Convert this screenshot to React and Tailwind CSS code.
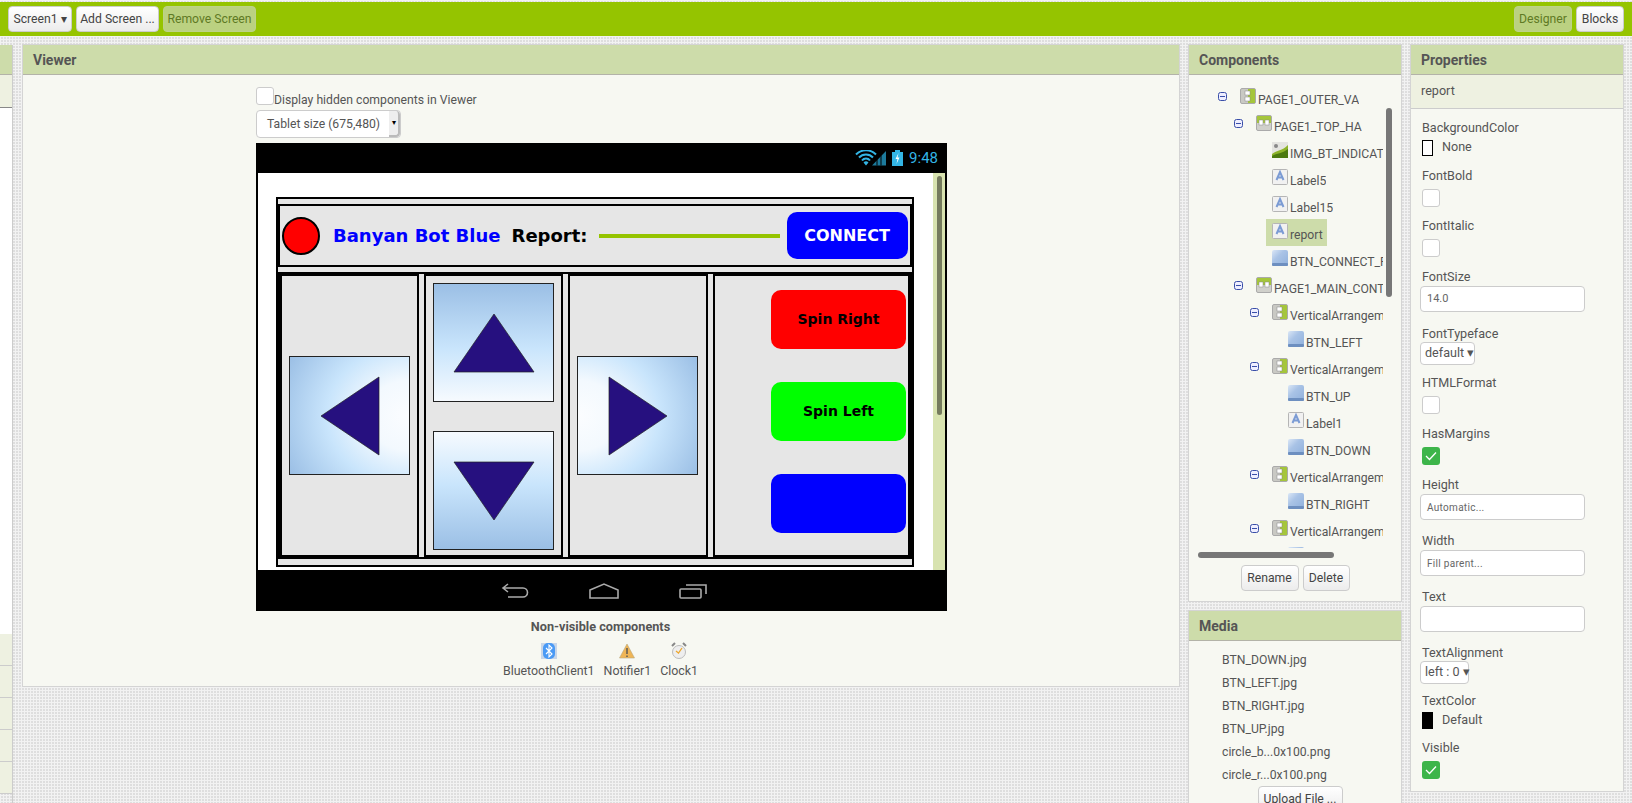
import React from "react";

const treeRows = [
  { depth: 0, icon: "va", name: "PAGE1_OUTER_VA", minus: true },
  { depth: 1, icon: "ha", name: "PAGE1_TOP_HA", minus: true },
  { depth: 2, icon: "image", name: "IMG_BT_INDICATOR" },
  { depth: 2, icon: "label", name: "Label5" },
  { depth: 2, icon: "label", name: "Label15" },
  { depth: 2, icon: "label", name: "report", selected: true },
  { depth: 2, icon: "button", name: "BTN_CONNECT_PAGE" },
  { depth: 1, icon: "ha", name: "PAGE1_MAIN_CONTROLS", minus: true },
  { depth: 2, icon: "va", name: "VerticalArrangement1", minus: true },
  { depth: 3, icon: "button", name: "BTN_LEFT" },
  { depth: 2, icon: "va", name: "VerticalArrangement2", minus: true },
  { depth: 3, icon: "button", name: "BTN_UP" },
  { depth: 3, icon: "label", name: "Label1" },
  { depth: 3, icon: "button", name: "BTN_DOWN" },
  { depth: 2, icon: "va", name: "VerticalArrangement3", minus: true },
  { depth: 3, icon: "button", name: "BTN_RIGHT" },
  { depth: 2, icon: "va", name: "VerticalArrangement4", minus: true },
  { depth: 3, icon: "button", name: "Button1" },
];

const mediaFiles = ["BTN_DOWN.jpg", "BTN_LEFT.jpg", "BTN_RIGHT.jpg", "BTN_UP.jpg", "circle_b...0x100.png", "circle_r...0x100.png"];

function TreeIcon({ type }) {
  if (type === "va") {
    return (
      <svg width="16" height="16" viewBox="0 0 16 16" className="shrink-0">
        <rect x="0.5" y="0.5" width="15" height="15" rx="1.5" fill="#c9c9c4" stroke="#aaa" />
        <path d="M8 1h6.500a.5.5 0 0 1 .5.5v13a.5.5 0 0 1-.5.5H8z" fill="#a5c63b" />
        <rect x="5" y="3" width="5" height="4" fill="#fff" stroke="#888" strokeWidth="0.5" />
        <rect x="5" y="9" width="5" height="4" fill="#fff" stroke="#888" strokeWidth="0.5" />
      </svg>
    );
  }
  if (type === "ha") {
    return (
      <svg width="16" height="16" viewBox="0 0 16 16" className="shrink-0">
        <rect x="0.5" y="0.5" width="15" height="15" rx="1.5" fill="#d0d0cb" stroke="#aaa" />
        <path d="M1 8V1.500a.5.5 0 0 1 .5-.5h13a.5.5 0 0 1 .5.5V8z" fill="#a5c63b" />
        <rect x="3" y="5" width="4" height="5" fill="#fff" stroke="#888" strokeWidth="0.5" />
        <rect x="9" y="5" width="4" height="5" fill="#fff" stroke="#888" strokeWidth="0.5" />
      </svg>
    );
  }
  if (type === "image") {
    return (
      <svg width="16" height="16" viewBox="0 0 16 16" className="shrink-0">
        <rect width="16" height="16" fill="#e4e4e0" />
        <path d="M0 12C5 8 10 9 16 3v13H0z" fill="#8db32a" />
        <path d="M0 14C5 11 10 12 16 7v9H0z" fill="#4c7a10" />
        <circle cx="4" cy="4" r="2" fill="#888" />
      </svg>
    );
  }
  if (type === "label") {
    return (
      <svg width="16" height="16" viewBox="0 0 16 16" className="shrink-0">
        <rect x="0.5" y="0.5" width="15" height="15" rx="1" fill="#f1f1f1" stroke="#b5b5b5" />
        <path d="M4.500 11 8 3l3.500 8M5.800 8.500h4.400" fill="none" stroke="#7b9bd4" strokeWidth="2" />
      </svg>
    );
  }
  return (
    <svg width="16" height="16" viewBox="0 0 16 16" className="shrink-0">
      <defs>
        <linearGradient id="btnGrad" x1="0" y1="0" x2="1" y2="1">
          <stop offset="0" stopColor="#dbe7f6" />
          <stop offset="0.4" stopColor="#a9c3e6" />
          <stop offset="1" stopColor="#8fb0dc" />
        </linearGradient>
      </defs>
      <rect width="16" height="16" rx="2" fill="url(#btnGrad)" />
      <rect y="13" width="16" height="3" rx="1" fill="#6d8fc0" />
    </svg>
  );
}

function MinusBox() {
  return (
    <svg width="9" height="9" viewBox="0 0 9 9" className="shrink-0">
      <rect x="0.5" y="0.5" width="8" height="8" rx="2" fill="#eef" stroke="#3a4fa8" />
      <path d="M2 4.500h5" stroke="#3a4fa8" />
    </svg>
  );
}

function Triangle({ dir }) {
  if (dir === "up" || dir === "down") {
    return (
      <svg width="82" height="60" viewBox="0 0 82 60">
        <path d={dir === "up" ? "M41 1 81 59H1z" : "M1 1H81L41 59z"} fill="#26107f" stroke="#222" strokeWidth="0.7" />
      </svg>
    );
  }
  return (
    <svg width="60" height="80" viewBox="0 0 60 80">
      <path d={dir === "left" ? "M59 1V79L1 40z" : "M1 1V79L59 40z"} fill="#26107f" stroke="#222" strokeWidth="0.7" />
    </svg>
  );
}

function ArrowTile({ dir, className }) {
  return (
    <div className={`w-[121px] h-[119px] border border-[#222] flex items-center justify-center shrink-0 ${className}`}>
      <Triangle dir={dir} />
    </div>
  );
}

function ToolButton({ children, className = "" }) {
  return (
    <div className={`h-[26px] flex items-center justify-center rounded-[4px] border border-[#ccc] bg-[linear-gradient(#fff,#ececec)] text-[12.2px] text-[#444] whitespace-nowrap shrink-0 ${className}`}>
      {children}
    </div>
  );
}

function GreenButton({ children, className = "" }) {
  return (
    <div className={`h-[26px] flex items-center justify-center rounded-[4px] border border-[#bdd28a] bg-[#bbd181] text-[12.2px] text-[#5f7a24] whitespace-nowrap shrink-0 ${className}`}>
      {children}
    </div>
  );
}

function PanelHeader({ children }) {
  return (
    <div className="h-[30px] flex items-center pl-[10px] pt-[1px] bg-[#cddcaa] border-b border-[#b3b3a8] text-[14px] font-bold text-[#555] shrink-0">
      {children}
    </div>
  );
}

function CheckBox({ checked }) {
  if (checked) {
    return (
      <div className="w-[18px] h-[18px] rounded-[3px] bg-[#3db54a] flex items-center justify-center">
        <svg width="12" height="10" viewBox="0 0 12 10">
          <path d="M1 5l3.500 3.500L11 1.500" fill="none" stroke="#fff" strokeWidth="1.300" />
        </svg>
      </div>
    );
  }
  return <div className="w-[18px] h-[18px] rounded-[3px] bg-white border border-[#ccc]" />;
}

function PropLabel({ children }) {
  return <div className="h-[16px] leading-[16px] text-[12.6px] text-[#555]">{children}</div>;
}

function PropInput({ children, small }) {
  return (
    <div className={`w-[165px] h-[26px] -ml-[2px] mt-[1px] rounded-[4px] bg-white border border-[#ccc] flex items-center pl-[6px] text-[#666] ${small ? "text-[10px] tracking-[0.3px]" : "text-[11px]"}`}>
      {children}
    </div>
  );
}

function PropSelect({ children, className }) {
  return (
    <div className={`h-[23px] -ml-[2px] rounded-[4px] bg-white border border-[#ccc] flex items-center pl-[4px] text-[12.6px] text-[#555] whitespace-nowrap ${className}`}>
      {children}
    </div>
  );
}

function NonVisible({ icon, label }) {
  return (
    <div className="flex flex-col items-center">
      <div className="h-[18px] flex items-center justify-center">{icon}</div>
      <div className="mt-[3px] text-[12.4px] text-[#555] leading-[16px]">{label}</div>
    </div>
  );
}

export default function App() {
  return (
    <div className="w-[1632px] h-[803px] overflow-hidden flex flex-col font-[family-name:Roboto] bg-[#dedede] bg-[linear-gradient(90deg,#f2f2f2_1px,transparent_1px),linear-gradient(#f2f2f2_1px,transparent_1px)] bg-[length:3px_3px]">
      {/* top bar */}
      <div className="mt-[2px] h-[34px] bg-[#95c400] flex items-center pl-[8px] pr-[8px] gap-[4px] shrink-0">
        <ToolButton className="w-[64px]">Screen1 ▾</ToolButton>
        <ToolButton className="w-[83px]">Add Screen ...</ToolButton>
        <GreenButton className="w-[93px]">Remove Screen</GreenButton>
        <div className="flex-1" />
        <GreenButton className="w-[58px]">Designer</GreenButton>
        <ToolButton className="w-[48px]">Blocks</ToolButton>
      </div>

      <div className="flex flex-1 min-h-0 mt-[9px]">
        {/* palette sliver */}
        <div className="w-[13px] shrink-0 flex flex-col border-r border-[#ccc]">
          <div className="h-[30px] bg-[#cddcaa] border-b border-[#b3b3a8]" />
          <div className="h-[32px] bg-[#eef1e1]" />
          <div className="h-[527px] bg-white border-t border-[#888]" />
          <div className="h-[32px] bg-[#eef1e1] border-b border-[#ccc]" />
          <div className="h-[32px] bg-[#eef1e1] border-b border-[#ccc]" />
          <div className="h-[32px] bg-[#eef1e1] border-b border-[#ccc]" />
          <div className="h-[32px] bg-[#eef1e1] border-b border-[#ccc]" />
          <div className="h-[32px] bg-[#eef1e1] border-b border-[#ccc]" />
        </div>

        {/* viewer */}
        <div className="ml-[10px] w-[1156px] h-[641px] shrink-0 bg-[#f7f8f2] shadow-[0_0_0_1px_#d4d4d4] flex flex-col">
          <PanelHeader>Viewer</PanelHeader>
          <div className="pl-[233px] pt-[12px] flex flex-col">
            <div className="flex items-end h-[18px]">
              <div className="w-[18px] h-[18px] rounded-[3px] bg-white border border-[#ccc] shrink-0" />
              <span className="text-[12.2px] text-[#555] leading-[14px] -mb-[2px]">Display hidden components in Viewer</span>
            </div>
            <div className="mt-[5px] w-[145px] h-[28px] rounded-[4px] bg-white border border-[#ccc] flex items-center text-[12.2px] text-[#555]">
              <span className="flex-1 pl-[10px]">Tablet size (675,480)</span>
              <span className="w-[11px] h-full bg-[#eee] border-r-2 border-b-2 border-[#bbb] rounded-r-[4px] flex items-center justify-center text-[8px] text-black">▾</span>
            </div>

            {/* phone */}
            <div className="mt-[5px] w-[691px] h-[468px] bg-black flex flex-col">
              <div className="h-[30px] flex items-center justify-end pr-[9px] gap-[5px] shrink-0">
                <svg width="32" height="16" viewBox="0 0 32 16">
                  <path d="M1 4.500a14 14 0 0 1 20 0M4 7.500a9.500 9.500 0 0 1 14 0M7 10.500a5 5 0 0 1 8 0" fill="none" stroke="#33b5e5" strokeWidth="2" />
                  <path d="M11 15.500 8.500 12.500a3.500 3.500 0 0 1 5 0z" fill="#33b5e5" />
                  <path d="M17 15.500 31 1v14.500z" fill="#1d7a9c" />
                  <path d="M22 9.500v6M26 5.500v10" stroke="#000" strokeWidth="1" />
                </svg>
                <svg width="11" height="16" viewBox="0 0 11 16">
                  <path d="M3 0h5v2h3v14H0V2h3z" fill="#33b5e5" />
                  <path d="M6.500 3 3.500 9h2l-1 5 3-6.500h-2z" fill="#fff" />
                </svg>
                <span className="text-[15px] text-[#33b5e5] ml-[1px]">9:48</span>
              </div>

              <div className="flex flex-1 min-h-0 ml-[2px] mr-[2px]">
                <div className="flex-1 bg-white pl-[18px] pt-[24px]">
                  <div className="w-[638px] h-[370px] border-2 border-black bg-[#e6e6e6] flex flex-col pt-[5px] gap-[5px] font-[family-name:'DejaVu_Sans'] font-bold">
                    <div className="h-[63px] border-2 border-black flex items-center shrink-0">
                      <div className="w-[38px] h-[38px] ml-[2px] rounded-full bg-[#ff0000] border-2 border-black shrink-0" />
                      <span className="ml-[13px] text-[18px] text-[#0000ff] whitespace-nowrap">Banyan Bot Blue</span>
                      <span className="ml-[11px] text-[18px] text-black whitespace-nowrap">Report:</span>
                      <div className="ml-[11px] w-[181px] h-[4px] bg-[#95c400] shrink-0" />
                      <div className="ml-[7px] w-[121px] h-[47px] rounded-[10px] bg-[#0000ff] text-white text-[16px] flex items-center justify-center shrink-0">CONNECT</div>
                    </div>
                    <div className="h-[287px] border-2 border-black flex gap-[5px] shrink-0">
                      <div className="w-[139px] border-2 border-black flex items-center justify-center shrink-0">
                        <ArrowTile dir="left" className="bg-[radial-gradient(ellipse_115%_100%_at_100%_50%,#fbfdff_0%,#f3f9fe_30%,#c9e5fc_60%,#9bbfe5_100%)]" />
                      </div>
                      <div className="w-[139px] border-2 border-black flex flex-col items-center pt-[7px] gap-[29px] shrink-0">
                        <ArrowTile dir="up" className="bg-[linear-gradient(to_bottom,#9bbfe5,#c9e5fc_55%,#f6fafe)]" />
                        <ArrowTile dir="down" className="bg-[linear-gradient(to_top,#9bbfe5,#c9e5fc_55%,#f6fafe)]" />
                      </div>
                      <div className="w-[140px] border-2 border-black flex items-center justify-center pr-[1px] shrink-0">
                        <ArrowTile dir="right" className="bg-[radial-gradient(ellipse_115%_100%_at_0%_50%,#fbfdff_0%,#f3f9fe_30%,#c9e5fc_60%,#9bbfe5_100%)]" />
                      </div>
                      <div className="flex-1 border-2 border-black flex flex-col items-end pr-[2px] pt-[14px] gap-[33px] text-[14px] text-black">
                        <div className="w-[135px] h-[59px] rounded-[10px] bg-[#ff0000] flex items-center justify-center">Spin Right</div>
                        <div className="w-[135px] h-[59px] rounded-[10px] bg-[#00ff00] flex items-center justify-center">Spin Left</div>
                        <div className="w-[135px] h-[59px] rounded-[10px] bg-[#0000ff]" />
                      </div>
                    </div>
                  </div>
                </div>
                <div className="w-[12px] bg-[#d8e3b0] shrink-0 flex justify-center pt-[3px]">
                  <div className="w-[5px] h-[239px] rounded-full bg-[#757b5e]" />
                </div>
              </div>

              <div className="h-[41px] flex items-center shrink-0 pl-[245px] gap-[60px]">
                <svg width="28" height="16" viewBox="0 0 28 16">
                  <path d="M7 1 2 5l5 4M2 5h20a4 4 0 0 1 0 9H7" fill="none" stroke="#aaa" strokeWidth="1.600" />
                </svg>
                <svg width="30" height="16" viewBox="0 0 30 16">
                  <path d="M1 7 15 1l14 6v8H1z" fill="none" stroke="#aaa" strokeWidth="1.600" />
                </svg>
                <svg width="28" height="16" viewBox="0 0 28 16">
                  <path d="M7 2h20v9" fill="none" stroke="#aaa" strokeWidth="1.600" />
                  <rect x="1" y="6" width="21" height="9" rx="1" fill="none" stroke="#aaa" strokeWidth="1.600" />
                </svg>
              </div>
            </div>

            <div className="w-[691px] mt-[8px] flex flex-col items-center">
              <div className="text-[12.7px] font-bold text-[#555] leading-[16px] -ml-[2px]">Non-visible components</div>
              <div className="mt-[7px] flex gap-[9px] -ml-[2px]">
                <NonVisible
                  label="BluetoothClient1"
                  icon={
                    <svg width="16" height="16" viewBox="0 0 16 16">
                      <rect width="16" height="16" fill="#c8d6e8" />
                      <rect x="2" width="12" height="16" rx="5" fill="#4a9af5" />
                      <path d="M5 5l6 6-3 3V2l3 3-6 6" fill="none" stroke="#fff" strokeWidth="1.100" />
                    </svg>
                  }
                />
                <NonVisible
                  label="Notifier1"
                  icon={
                    <svg width="16" height="16" viewBox="0 0 16 16">
                      <path d="M8 1 15.500 15H.5z" fill="#efb556" stroke="#b9a77c" strokeWidth="0.6" />
                      <path d="M8 5v6M8 12.500v1.500" stroke="#555" strokeWidth="1.400" />
                    </svg>
                  }
                />
                <NonVisible
                  label="Clock1"
                  icon={
                    <svg width="16" height="18" viewBox="0 0 16 18">
                      <path d="M1 4l3-3M15 4l-3-3" stroke="#888" strokeWidth="2" />
                      <circle cx="8" cy="10" r="6.500" fill="#eee" stroke="#bbb" />
                      <path d="M5 9l2.500 2L11 6" fill="none" stroke="#eda82e" strokeWidth="1.300" />
                    </svg>
                  }
                />
              </div>
            </div>
          </div>
        </div>

        {/* components + media */}
        <div className="ml-[10px] w-[212px] shrink-0 flex flex-col">
          <div className="h-[556px] bg-[#f7f8f2] shadow-[0_0_0_1px_#d4d4d4] flex flex-col shrink-0">
            <PanelHeader>Components</PanelHeader>
            <div className="relative h-[486px] shrink-0">
              <div className="h-[473px] overflow-hidden pt-[13px]">
                {treeRows.map((row) => (
                  <div key={row.name + row.depth} className="h-[27px] flex">
                    <div className="flex items-start shrink-0" style={{ paddingLeft: 29 + row.depth * 16 }}>
                      <div className="w-[22px] pt-[4px] shrink-0">{row.minus && <MinusBox />}</div>
                    </div>
                    <div className={`h-[27px] flex overflow-hidden w-fit ${row.selected ? "bg-[#cddcaa] -ml-[6px] pl-[6px] pr-[4px] -mt-[4px] pt-[4px]" : ""}`} style={{ maxWidth: 143 - row.depth * 16 }}>
                      <TreeIcon type={row.icon} />
                      <span className="ml-[2px] mt-[2px] text-[12.2px] text-[#555] leading-[20px] whitespace-nowrap">{row.name}</span>
                    </div>
                  </div>
                ))}
              </div>
              <div className="absolute left-[197px] top-[33px] w-[6px] h-[189px] rounded-full bg-[#777]" />
              <div className="absolute left-[9px] top-[477px] w-[136px] h-[6px] rounded-full bg-[#777]" />
            </div>
            <div className="flex justify-center gap-[4px] mt-[4px]">
              <ToolButton className="w-[58px]">Rename</ToolButton>
              <ToolButton className="w-[47px]">Delete</ToolButton>
            </div>
          </div>
          <div className="mt-[10px] flex-1 bg-[#f7f8f2] shadow-[0_0_0_1px_#d4d4d4] flex flex-col overflow-hidden">
            <PanelHeader>Media</PanelHeader>
            <div className="pl-[33px] pt-[8px] flex flex-col">
              {mediaFiles.map((name) => (
                <div key={name} className="h-[23px] flex items-center text-[12.2px] text-[#555]">{name}</div>
              ))}
            </div>
            <div className="flex justify-center pl-[10px] -mt-[1px]">
              <ToolButton className="w-[85px]">Upload File ...</ToolButton>
            </div>
          </div>
        </div>

        {/* properties */}
        <div className="ml-[10px] w-[212px] h-[746px] shrink-0 bg-[#f7f8f2] shadow-[0_0_0_1px_#d4d4d4] flex flex-col">
          <PanelHeader>Properties</PanelHeader>
          <div className="h-[34px] bg-[#eef1e1] border-b border-[#ccc] flex items-center pl-[10px] text-[12.6px] text-[#555] shrink-0">report</div>
          <div className="pl-[11px] pt-[11px] flex flex-col">
            <PropLabel>BackgroundColor</PropLabel>
            <div className="mt-[3px] h-[17px] flex items-center text-[12.6px] text-[#555]">
              <div className="w-[11px] h-[16px] border border-black bg-white" />
              <span className="ml-[9px]">None</span>
            </div>
            <div className="mt-[12px]"><PropLabel>FontBold</PropLabel></div>
            <div className="mt-[5px]"><CheckBox /></div>
            <div className="mt-[11px]"><PropLabel>FontItalic</PropLabel></div>
            <div className="mt-[5px]"><CheckBox /></div>
            <div className="mt-[12px]"><PropLabel>FontSize</PropLabel></div>
            <PropInput>14.0</PropInput>
            <div className="mt-[14px]"><PropLabel>FontTypeface</PropLabel></div>
            <PropSelect className="w-[55px]">default ▾</PropSelect>
            <div className="mt-[10px]"><PropLabel>HTMLFormat</PropLabel></div>
            <div className="mt-[5px]"><CheckBox /></div>
            <div className="mt-[12px]"><PropLabel>HasMargins</PropLabel></div>
            <div className="mt-[5px]"><CheckBox checked /></div>
            <div className="mt-[12px]"><PropLabel>Height</PropLabel></div>
            <PropInput small>Automatic...</PropInput>
            <div className="mt-[13px]"><PropLabel>Width</PropLabel></div>
            <PropInput small>Fill parent...</PropInput>
            <div className="mt-[13px]"><PropLabel>Text</PropLabel></div>
            <PropInput />
            <div className="mt-[13px]"><PropLabel>TextAlignment</PropLabel></div>
            <PropSelect className="w-[49px]">left : 0 ▾</PropSelect>
            <div className="mt-[9px]"><PropLabel>TextColor</PropLabel></div>
            <div className="mt-[3px] h-[17px] flex items-center text-[12.6px] text-[#555]">
              <div className="w-[11px] h-[17px] bg-black" />
              <span className="ml-[9px]">Default</span>
            </div>
            <div className="mt-[11px]"><PropLabel>Visible</PropLabel></div>
            <div className="mt-[5px]"><CheckBox checked /></div>
          </div>
        </div>
      </div>
    </div>
  );
}
